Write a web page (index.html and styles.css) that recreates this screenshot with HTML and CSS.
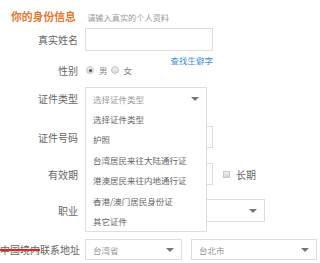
FILE: index.html
```html
<!DOCTYPE html>
<html lang="zh-CN">
<head>
  <meta charset="UTF-8">
  <meta name="viewport" content="width=device-width, initial-scale=1.0">
  <title>你的身份信息</title>
  <link rel="stylesheet" href="styles.css">
</head>
<body>
  <div class="form">
    <h2 class="title">
      <span class="title-main">你的身份信息</span>
      <span class="title-tip">请输入真实的个人资料</span>
    </h2>

    <div class="row row-name">
      <label class="label">真实姓名</label>
      <input type="text" class="text-input w-128">
    </div>
    <div class="hint-row">
      <a class="link" href="#">查找生僻字</a>
    </div>

    <div class="row row-gender">
      <label class="label">性别</label>
      <span class="radio checked"></span><span class="opt-text">男</span>
      <span class="radio"></span><span class="opt-text">女</span>
    </div>

    <div class="row row-type">
      <label class="label">证件类型</label>
      <div class="select-wrap">
        <div class="select w-122">
          <span class="select-text">选择证件类型</span>
          <i class="caret"></i>
        </div>
        <ul class="dropdown">
          <li>选择证件类型</li>
          <li>护照</li>
          <li>台湾居民来往大陆通行证</li>
          <li>港澳居民来往内地通行证</li>
          <li>香港/澳门居民身份证</li>
          <li>其它证件</li>
        </ul>
      </div>
    </div>

    <div class="row row-idnum">
      <label class="label">证件号码</label>
      <input type="text" class="text-input w-128">
    </div>

    <div class="row row-valid">
      <label class="label">有效期</label>
      <input type="text" class="text-input w-128">
      <span class="checkbox"></span><span class="check-text">长期</span>
    </div>

    <div class="row row-job">
      <label class="label">职业</label>
      <div class="select w-180">
        <span class="select-text"></span>
        <i class="caret"></i>
      </div>
    </div>

    <div class="row row-addr">
      <label class="label"><span class="strike">中国境内</span>联系地址</label>
      <div class="select w-97">
        <span class="select-text">台湾省</span>
        <i class="caret"></i>
      </div>
      <div class="select w-126 gap-left">
        <span class="select-text">台北市</span>
        <i class="caret"></i>
      </div>
    </div>
  </div>
</body>
</html>
```

FILE: styles.css
```css
body{
  margin: 0;
  font-family: "Noto Sans CJK SC", "Noto Sans", sans-serif;
  background-color: #fff;
  color: #666;
}
.form{
  width: 320px;
}
.title{
  margin: 0;
  height: 22px;
  line-height: 22px;
  padding-left: 11px;
  font-weight: normal;
  white-space: nowrap;
}
.title-main{
  font-size: 10.8px;
  font-weight: bold;
  color: #e8782e;
}
.title-tip{
  font-size: 8.2px;
  color: #999;
  margin-left: 6px;
}
.row{
  display: flex;
  align-items: center;
}
.label{
  width: 78px;
  padding-right: 7px;
  text-align: right;
  font-size: 10px;
  color: #666;
  white-space: nowrap;
  flex-shrink: 0;
}
.text-input{
  box-sizing: border-box;
  height: 22px;
  border: 1px solid #ddd;
  padding: 0;
  margin: 0;
  outline: none;
  background: #fff;
}
.w-128{ width: 128px; }
.w-122{ width: 122px; }
.w-180{ width: 180px; }
.w-97{ width: 97px; }
.w-126{ width: 126px; }
.gap-left{ margin-left: 9px; }

.row-name{ margin-top: 6px; }
.row-name .text-input{ height: 23px; }
.hint-row{
  height: 12px;
  line-height: 12px;
  width: 213px;
  text-align: right;
}
.link{
  font-size: 8.5px;
  color: #3b8fe0;
  text-decoration: none;
}
.row-gender{ height: 14px; }
.radio{
  box-sizing: border-box;
  width: 8px;
  height: 8px;
  border: 1px solid #c4c4c4;
  border-radius: 50%;
  background: linear-gradient(#f2f2f2, #d8d8d8);
  position: relative;
  margin-left: 1px;
}
.radio.checked::after{
  content: "";
  position: absolute;
  left: 1.5px;
  top: 1.5px;
  width: 3px;
  height: 3px;
  border-radius: 50%;
  background: #555;
}
.opt-text{
  font-size: 8.5px;
  color: #888;
  margin: 0 2px 0 5px;
}
.row-type{ margin-top: 10px; }
.select-wrap{
  position: relative;
}
.select{
  box-sizing: border-box;
  height: 23px;
  border: 1px solid #ddd;
  background: #fff;
  display: flex;
  align-items: center;
  justify-content: space-between;
  padding: 0 7px 0 7px;
}
.select-text{
  font-size: 8.5px;
  color: #999;
}
.caret{
  width: 0;
  height: 0;
  border-left: 4px solid transparent;
  border-right: 4px solid transparent;
  border-top: 4px solid #777;
}
.dropdown{
  position: absolute;
  left: 0;
  top: 22px;
  width: 122px;
  box-sizing: border-box;
  margin: 0;
  padding: 0;
  list-style: none;
  background: #fff;
  border: 1px solid #ddd;
  border-top: none;
  z-index: 2;
}
.dropdown li{
  height: 20.4px;
  line-height: 20.4px;
  padding-left: 7px;
  font-size: 8.5px;
  color: #666;
  white-space: nowrap;
}
.row-idnum{ margin-top: 16px; }
.row-valid{ margin-top: 15px; }
.checkbox{
  box-sizing: border-box;
  width: 7px;
  height: 7px;
  border: 1px solid #c8c8c8;
  background: linear-gradient(#f0f0f0, #d4d4d4);
  margin-left: 10px;
}
.check-text{
  font-size: 10px;
  color: #666;
  margin-left: 6px;
}
.row-job{ margin-top: 14px; }
.row-addr{ margin-top: 17px; }
.row-addr .select{ height: 21px; }
.strike{
  text-decoration: line-through;
  text-decoration-color: #e3261c;
  text-decoration-thickness: 2px;
}
```
